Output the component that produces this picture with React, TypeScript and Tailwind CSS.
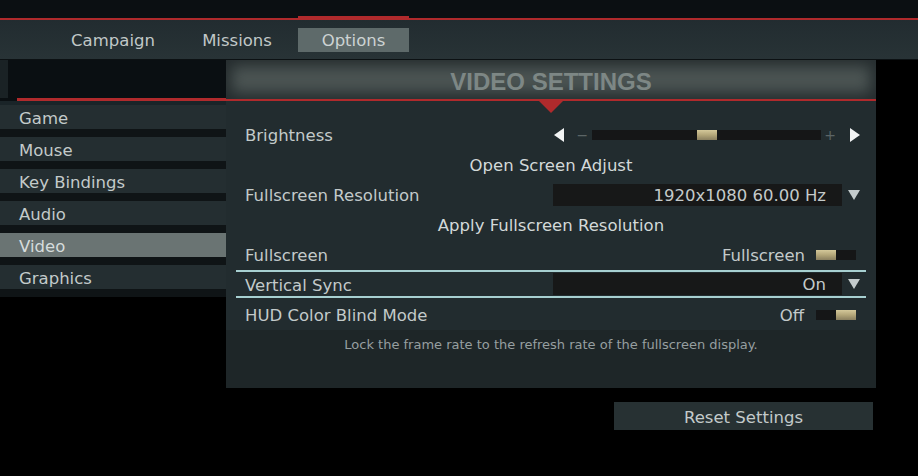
import React from "react";

const tabs = [
  { label: "Campaign", w: "w-[126px]" },
  { label: "Missions", w: "w-[118px]" },
  { label: "Options", w: "w-[111px]" },
];
const menu = ["Game", "Mouse", "Key Bindings", "Audio", "Video", "Graphics"];

function Toggle({ on }: { on: boolean }) {
  return (
    <div className={`flex w-[40px] h-[10px] bg-[#151617] ${on ? "justify-start" : "justify-end"}`}>
      <div className="w-[20px] h-full bg-gradient-to-b from-[#d4c89a] via-[#b3a679] to-[#8a7f5f]" />
    </div>
  );
}

function Arrow({ dir }: { dir: "left" | "right" }) {
  return (
    <svg width="12" height="14" viewBox="0 0 12 14" className="flex-none">
      {dir === "left" ? (
        <polygon points="11,0 11,14 1,7" fill="#f2f4f4" />
      ) : (
        <polygon points="1,0 1,14 11,7" fill="#f2f4f4" />
      )}
    </svg>
  );
}

function DownCaret() {
  return (
    <svg width="12" height="10" viewBox="0 0 12 10" className="flex-none">
      <polygon points="0,0 12,0 6,10" fill="#c3cbcc" />
    </svg>
  );
}

function Dropdown({ value }: { value: string }) {
  return (
    <div className="ml-auto flex items-center">
      <div className="w-[289px] h-[22px] bg-[#171818] flex items-center justify-end pr-[16px] text-[#c4caca]">
        <span className="pt-[3px]">{value}</span>
      </div>
      <div className="ml-[6px]">
        <DownCaret />
      </div>
    </div>
  );
}

export default function App() {
  return (
    <div
      className="w-[918px] h-[476px] bg-black overflow-hidden text-[16.5px] leading-none"
      style={{ fontFamily: '"DejaVu Sans", "Noto Sans", sans-serif' }}
    >
      {/* top strip with red rule */}
      <div className="h-[20px] bg-[#0b0f12] flex items-end">
        <div className="w-[298px] h-[2px] bg-[#b02a2c]" />
        <div className="w-[111px] h-[4px] bg-[#b02a2c]" />
        <div className="flex-1 h-[2px] bg-[#b02a2c]" />
      </div>

      {/* nav */}
      <div className="h-[40px] bg-gradient-to-b from-[#222c30] to-[#283336] border-b border-[#0c1113] flex items-start pt-[8px] pl-[50px] gap-[2px]">
        {tabs.map((t) => (
          <div
            key={t.label}
            className={`${t.w} h-[24px] flex items-center justify-center pt-[3px] ${
              t.label === "Options" ? "bg-[#5e6a6a] text-[#cdd3d3]" : "text-[#c1c8c8]"
            }`}
          >
            {t.label}
          </div>
        ))}
      </div>

      <div className="flex">
        {/* sidebar */}
        <div className="w-[226px] flex-none">
          <div className="h-[38px] flex">
            <div className="w-[8px] bg-[#1a2225]" />
            <div className="flex-1 bg-[#0a0f12]" />
          </div>
          <div className="h-[3px] flex">
            <div className="w-[17px] bg-[#0a0f12]" />
            <div className="flex-1 bg-[#b02a2c]" />
          </div>
          <div className="h-[4px] bg-[#1a2428]" />
          {menu.map((m) => (
            <div key={m}>
              <div
                className={`h-[24px] flex items-center pl-[19px] pt-[4px] ${
                  m === "Video" ? "bg-[#6a7473] text-[#d6dcdc]" : "bg-[#242e31] text-[#c3caca]"
                }`}
              >
                {m}
              </div>
              <div className="h-[8px] bg-[#0f1416]" />
            </div>
          ))}
        </div>

        {/* main */}
        <div className="w-[650px] flex-none">
          <div className="h-[39px] bg-[#4b5453] shadow-[inset_0_0_14px_6px_rgba(30,38,40,0.85)] flex items-center justify-center pt-[4px]">
            <span
              className="text-[24px] font-bold text-[#7d8785]"
              style={{ fontFamily: '"Liberation Sans", Arial, sans-serif' }}
            >
              VIDEO SETTINGS
            </span>
          </div>
          <div className="h-[2px] bg-[#b02a2c]" />

          <div className="bg-[#222c2f]">
            <div className="h-[19px] flex justify-center">
              <svg width="24" height="12" viewBox="0 0 24 12">
                <polygon points="0,0 24,0 12,12" fill="#b02a2c" />
              </svg>
            </div>

            {/* Brightness */}
            <div className="h-[30px] flex items-center pl-[19px] pr-[15px] text-[#c3caca]">
              <span className="pt-[3px]">Brightness</span>
              <div className="ml-auto flex items-center">
                <Arrow dir="left" />
                <span className="ml-[12px] text-[#5c6566] text-[14px]">−</span>
                <div className="ml-[4px] w-[229px] h-[10px] bg-[#151617] flex">
                  <div className="w-[105px]" />
                  <div className="w-[20px] h-full bg-gradient-to-b from-[#d4c89a] via-[#b3a679] to-[#8a7f5f]" />
                </div>
                <span className="ml-[3px] text-[#5c6566] text-[14px]">+</span>
                <div className="ml-[13px]">
                  <Arrow dir="right" />
                </div>
              </div>
            </div>

            <div className="h-[30px] flex items-center justify-center text-[#d3d9d9] pt-[3px]">Open Screen Adjust</div>

            <div className="h-[30px] flex items-center pl-[19px] pr-[16px] text-[#c3caca]">
              <span className="pt-[3px]">Fullscreen Resolution</span>
              <Dropdown value="1920x1080 60.00 Hz" />
            </div>

            <div className="h-[30px] flex items-center justify-center text-[#d3d9d9] pt-[3px]">Apply Fullscreen Resolution</div>

            <div className="h-[30px] flex items-center pl-[19px] pr-[20px] text-[#c3caca]">
              <span className="pt-[3px]">Fullscreen</span>
              <span className="ml-auto mr-[11px] pt-[3px]">Fullscreen</span>
              <Toggle on />
            </div>

            <div className="h-[30px]">
              <div className="mx-[10px] h-[28px] border-y-2 border-[#a7d0d1] flex items-center pl-[9px] pr-[6px] text-[#c3caca]">
                <span className="pt-[4px]">Vertical Sync</span>
                <Dropdown value="On" />
              </div>
            </div>

            <div className="h-[30px] flex items-center pl-[19px] pr-[20px] text-[#c3caca]">
              <span className="pt-[3px]">HUD Color Blind Mode</span>
              <span className="ml-auto mr-[12px] pt-[3px]">Off</span>
              <Toggle on={false} />
            </div>

            <div className="h-[58px] bg-[#1e2628] pt-[8px] text-center text-[13px] text-[#969fa0]">
              Lock the frame rate to the refresh rate of the fullscreen display.
            </div>
          </div>

          <div className="flex justify-end pr-[3px] pt-[14px]">
            <div className="w-[259px] h-[28px] bg-[#273133] flex items-center justify-center text-[#c3caca] pt-[4px]">
              Reset Settings
            </div>
          </div>
        </div>
      </div>
    </div>
  );
}
